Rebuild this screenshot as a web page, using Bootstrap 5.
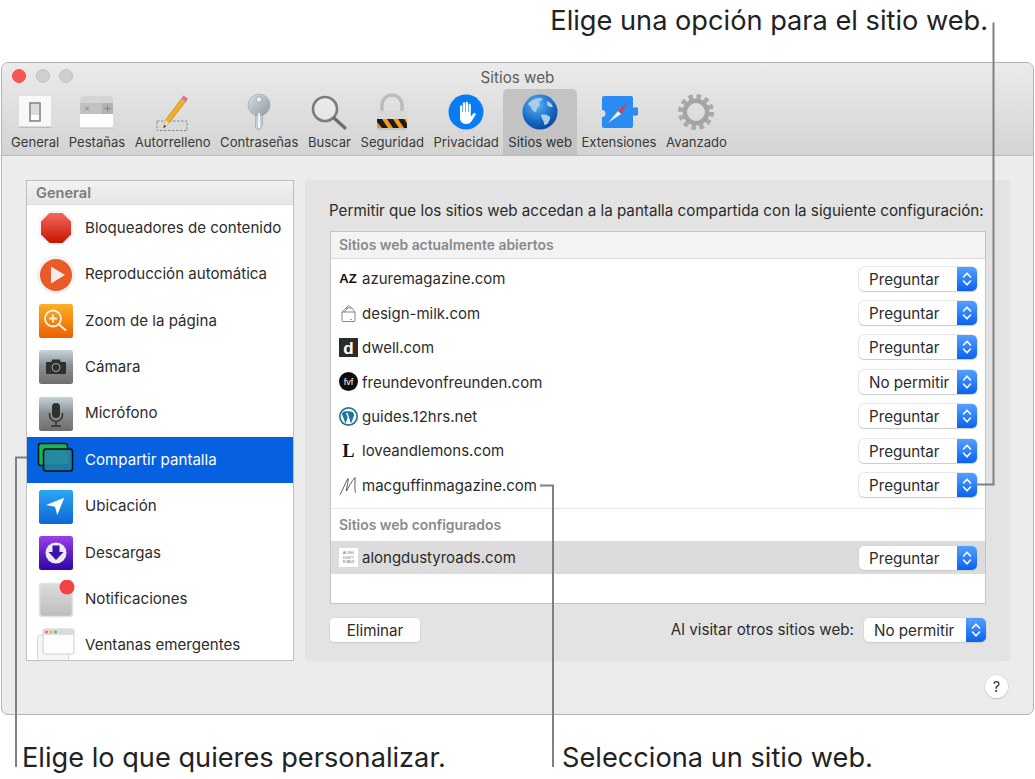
<!doctype html>
<html lang="es"><head><meta charset="utf-8"><title>Sitios web</title>
<link href="https://cdn.jsdelivr.net/npm/bootstrap@5.3.0/dist/css/bootstrap.min.css" rel="stylesheet">
<style>
html,body{background:#fff;margin:0;height:779px;overflow:hidden}
body{position:relative;font-family:Inter,"Liberation Sans",sans-serif;color:#2c2c2c;font-size:15.1px;width:1035px}
.top-note{height:62px;padding:5px 47px 0 0;text-align:right;font-size:27.2px;line-height:32px;color:#222}
.prefs-win{margin-left:1px;width:1033px;height:653px;border:1px solid #b4b4b4;border-radius:7px;background:#ececec;overflow:hidden}
.tool-head{height:93px;background:linear-gradient(#ebebeb,#d3d3d3);border-bottom:1px solid #bcbcbc;position:relative}
.lights{position:absolute;left:10px;top:6px;gap:9.6px}
.dot-l{width:14px;height:14px;border-radius:50%;background:#cfcfcf;border:1px solid #c2c2c2}
.dot-r{background:#fc5650;border-color:#f0504a}
.win-title{text-align:center;font-size:15.200px;line-height:18px;padding-top:6px;color:#5c5c5c;height:26px}
.tool-row{padding-left:4.250px;height:66px}
.tool-i{padding:4px 4.750px 0;text-align:center;font-size:13.100px;color:#3a3a3a;height:66px;white-space:nowrap}
.tool-i svg{display:block;margin:0 auto 2px;width:38px;height:38px}
.tool-on{background:#c3c3c3;border-radius:5px 5px 0 0;padding-left:5px;padding-right:5px;margin:0 -.25px;color:#303030}
.main-area{padding:24px 24px 0 24px;gap:11px;height:505px}
.side-box{width:268px;height:481px;border:1px solid #bfbfbf;background:#fff;overflow:hidden;flex:none}
.side-head{height:24px;line-height:25px;padding-left:9px;background:linear-gradient(#f2f2f2,#e6e6e6);border-bottom:1px solid #dedede;color:#7c7c7c;font-weight:600;font-size:14.600px}
.side-row{height:46.400px;border:0;border-radius:0!important;padding:0 0 0 10px;color:#2c2c2c;font-size:15.100px;background:transparent;gap:10px;white-space:nowrap}
.side-row svg{width:38px;height:38px;flex:none}
.side-row.side-on{background:#0561e0;color:#fff}
.pane-box{width:705px;height:481px;background:#e3e3e3;border-radius:4px;padding:20px 24px 0 24px;flex:none}
.pane-txt{font-size:15.200px;line-height:22px;height:31px;white-space:nowrap;color:#2c2c2c}
.site-box{width:656px;height:373px;margin-left:1px;border:1px solid #c4c4c4;background:#fff}
.sec-head{height:27px;line-height:27px;padding-left:8px;background:#f3f3f3;border-bottom:1px solid #dcdcdc;color:#8a8a8a;font-weight:600;font-size:13.900px}
.site-row{height:34.400px;padding:0 8px 0 8px;font-size:15px;gap:4px}
.site-row svg.fav{width:19px;height:19px;flex:none}
.site-name{flex:1 1 auto;padding-top:2px}
.site-list{padding-top:2.500px}
.sec-two{height:33px;line-height:33px;padding-left:8px;border-top:1px solid #e4e4e4;color:#8a8a8a;font-weight:600;font-size:13.900px;margin-top:6px}
.site-sel{background:#dcdcdc;height:33px}
.pop-b{height:24px;width:118px;border-radius:5px;background:#fff;box-shadow:0 0 0 .5px #d0d0d0,0 1px 1px #c8c8c8;overflow:hidden;font-size:15.200px;color:#2c2c2c}
.pop-t{padding-left:10px;line-height:25px;white-space:nowrap}
.pop-a{width:20px;height:24px;background:linear-gradient(#54a0ff,#0a62f0);display:flex;align-items:center;justify-content:center}
.pop-a svg{width:10px;height:16px}
.foot-row{height:58px;padding:14px 0 0 1px}
.plain-b{width:90px;height:24px;padding:0;background:#fff;border:0;border-radius:4px;box-shadow:0 0 0 .5px #d0d0d0,0 1px 1px #c8c8c8;font-size:15.200px;color:#2c2c2c;line-height:23px}
.foot-lab{font-size:15.200px;gap:10px;line-height:24px}
.pop-w{width:122px}
.help-row{padding:14px 25px 0 0}
.help-b{width:23px;height:23px;padding:0;border-radius:50%;border:0;background:#fff;box-shadow:0 0 0 .5px #ccc,0 1px 1px #bdbdbd;font-size:14.500px;line-height:22px;color:#333}
.low-notes{position:absolute;left:0;top:741px;width:1035px;height:34px;font-size:27.200px;line-height:34px;color:#222}
.low-a{margin-left:22px;width:540px}
.lead-lines{position:absolute;left:0;top:0;pointer-events:none}
.svg-defs{position:absolute}
</style></head><body>
<svg width="0" height="0" class="svg-defs"><defs>
<symbol id="updn" viewBox="0 0 10 16"><path d="M1.500 6 5 2.200 8.500 6M1.500 10 5 13.800 8.500 10" fill="none" stroke="#fff" stroke-width="1.600" stroke-linecap="round" stroke-linejoin="round"/></symbol>
<linearGradient id="gBlue" x1="0" y1="0" x2="0" y2="1"><stop offset="0" stop-color="#2ba6f5"/><stop offset="1" stop-color="#0f66d6"/></linearGradient>
<linearGradient id="gOr" x1="0" y1="0" x2="0" y2="1"><stop offset="0" stop-color="#fdb025"/><stop offset="1" stop-color="#ec5e00"/></linearGradient>
<linearGradient id="gRed" x1="0" y1="0" x2="0" y2="1"><stop offset="0" stop-color="#f2695c"/><stop offset="1" stop-color="#c81400"/></linearGradient>
<linearGradient id="gPur" x1="0" y1="0" x2="0" y2="1"><stop offset="0" stop-color="#9a3fe8"/><stop offset="1" stop-color="#2f04a6"/></linearGradient>
<linearGradient id="gCam" x1="0" y1="0" x2="0" y2="1"><stop offset="0" stop-color="#c6d4dc"/><stop offset=".45" stop-color="#8b9297"/><stop offset="1" stop-color="#6e6e6e"/></linearGradient>
<linearGradient id="gSil" x1="0" y1="0" x2="1" y2="1"><stop offset="0" stop-color="#d8dfe3"/><stop offset="1" stop-color="#8f999f"/></linearGradient>
<linearGradient id="gNot" x1="0" y1="0" x2="0" y2="1"><stop offset="0" stop-color="#dcdcdc"/><stop offset="1" stop-color="#bdbdbd"/></linearGradient>
<radialGradient id="gGlobe" cx=".4" cy=".3" r=".8"><stop offset="0" stop-color="#5db4f5"/><stop offset=".6" stop-color="#1569c7"/><stop offset="1" stop-color="#0a3f8c"/></radialGradient>
</defs></svg>

<div class="top-note">Elige una opción para el sitio web.</div>

<div class="prefs-win">
 <div class="tool-head">
  <div class="lights d-flex"><span class="dot-l dot-r"></span><span class="dot-l"></span><span class="dot-l"></span></div>
  <div class="win-title">Sitios web</div>
  <div class="tool-row d-flex">
   <div class="tool-i"><svg viewBox="0 0 38 38"><rect x="3" y="3" width="32" height="32" fill="#f8f8f8"/><rect x="3" y="33.500" width="32" height="1.500" fill="#bdbdbd"/><rect x="14" y="10" width="10" height="18" fill="#fff" stroke="#7d7d7d" stroke-width="1.500"/><rect x="15" y="11" width="8" height="11" fill="#dcdcdc"/></svg>General</div>
   <div class="tool-i"><svg viewBox="0 0 38 38"><rect x="2" y="3" width="33" height="33" rx="3" fill="#fff"/><path d="M2 14V6a3 3 0 0 1 3-3h27a3 3 0 0 1 3 3v8z" fill="#d4d4d4"/><rect x="2" y="10" width="33" height="11" fill="#c2c2c2"/><rect x="24" y="10" width="11" height="11" fill="#b2b2b2"/><path d="M7 13.500l4 4m0-4l-4 4M29.500 12.500v6m-3-3h6" stroke="#808080" stroke-width=".9" fill="none"/><rect x="2" y="34.500" width="33" height="1.200" fill="#bbb"/></svg>Pestañas</div>
   <div class="tool-i"><svg viewBox="0 0 38 38"><rect x="3" y="28" width="30" height="9.500" fill="none" stroke="#8a8a8a" stroke-dasharray="2.500 1.500"/><path d="M9.500 35l2-8L28 5l4 3L15 30z" fill="#f2b026" stroke="#b77a10" stroke-width=".6"/><path d="M9.500 35l2-8 3.500 3z" fill="#f1dcb6"/><path d="M9.500 35l.8-3 1.700 1.300z" fill="#222"/><path d="M27.500 5.500l2-3 4.500 3.200-2 3z" fill="#d96f9f"/></svg>Autorrelleno</div>
   <div class="tool-i"><svg viewBox="0 0 38 38"><path d="M15.500 19h7v13l-1.500 2v1l-2 2-3.500-2z" fill="#c6ced3" stroke="#959ea3" stroke-width=".6"/><circle cx="19" cy="12" r="11" fill="url(#gSil)" stroke="#a1abb1" stroke-width=".6"/><circle cx="19" cy="6.500" r="2.800" fill="#eee" stroke="#8a9399" stroke-width=".6"/><rect x="18.300" y="20" width="1.600" height="15" fill="#fff"/></svg>Contraseñas</div>
   <div class="tool-i"><svg viewBox="0 0 38 38"><circle cx="15" cy="16" r="12" fill="#f4f4f4" fill-opacity=".45" stroke="#7d7d7d" stroke-width="2.600"/><path d="M24 25l11 10" stroke="#6d6d6d" stroke-width="3.200" stroke-linecap="round"/></svg>Buscar</div>
   <div class="tool-i"><svg viewBox="0 0 38 38"><path d="M9 19v-7a10 10 0 0 1 20 0v7" fill="none" stroke="#b9bdc0" stroke-width="3.500"/><rect x="4" y="18" width="30" height="19" rx="1.500" fill="#c8c8c8"/><rect x="4" y="18" width="30" height="8" fill="#d8d8d8"/><rect x="4" y="26" width="30" height="9" fill="#f39a1e"/><path d="M4 26h5l6 9H9l-5-6zM14 26h6l6 9h-6zM25 26h6l3 4.500V35h-3z" fill="#1c1c1c"/></svg>Seguridad</div>
   <div class="tool-i"><svg viewBox="0 0 38 38"><circle cx="19" cy="19" r="17.500" fill="#0a7cf2"/><path d="M13 13.500c0-1.700 2.200-1.700 2.200 0V19h.6V10.500c0-1.700 2.300-1.700 2.300 0V19h.6V10c0-1.700 2.300-1.700 2.300 0v9h.6v-7c0-1.700 2.200-1.700 2.200 0v11.500l2.600-3c1.300-1.300 3.100 0 2.100 1.500l-3.800 6c-1.200 1.900-3 3-5.500 3-3.900 0-6.200-2.400-6.200-6.500z" fill="#fff"/></svg>Privacidad</div>
   <div class="tool-i tool-on"><svg viewBox="0 0 38 38"><circle cx="19" cy="19" r="17.500" fill="url(#gGlobe)"/><path d="M7 11c3-4 8-6 12-6 2 0 3 1 2 2l-3 2 1 3-3 3-1 4-3-1-2-4zM20 22c3-1 6 0 8 1 2 1 1 4-1 7-2 2-4 3-4 0 0-2-3-5-3-8zM26 8c3 1 5 3 6 6l-3 0-3-2z" fill="#a9cfe8"/></svg>Sitios web</div>
   <div class="tool-i"><svg viewBox="0 0 38 38"><path d="M2 5a2 2 0 0 1 2-2h27a2 2 0 0 1 2 2v10a4.200 4.200 0 1 1 0 7v11a2 2 0 0 1-2 2H4a2 2 0 0 1-2-2V24a3.500 3.500 0 1 0 0-7z" fill="#2a8bf2"/><path d="M28 9L18 18l3 3z" fill="#ea3a3f"/><path d="M8 30l10-12 3 3z" fill="#f4f4f4"/></svg>Extensiones</div>
   <div class="tool-i"><svg viewBox="0 0 38 38"><circle cx="19" cy="19" r="15.500" fill="none" stroke="#a8aaac" stroke-width="5" stroke-dasharray="4.500 3.620"/><circle cx="19" cy="19" r="11" fill="none" stroke="#a2a4a6" stroke-width="5"/><circle cx="19" cy="19" r="8.500" fill="none" stroke="#d9d9d9" stroke-width="1"/></svg>Avanzado</div>
  </div>
 </div>

 <div class="main-area d-flex">
  <div class="side-box">
   <div class="side-head">General</div>
   <div class="list-group list-group-flush">
    <div class="list-group-item side-row d-flex align-items-center"><svg viewBox="0 0 38 38"><path d="M11.500 2h15L36 11.500v15L26.500 36h-15L2 26.500v-15z" fill="#f3f3f3"/><path d="M12.500 4h13L34 12.500v13L25.500 34h-13L4 25.500v-13z" fill="url(#gRed)"/></svg>Bloqueadores de contenido</div>
    <div class="list-group-item side-row d-flex align-items-center"><svg viewBox="0 0 38 38"><circle cx="19" cy="19" r="18.500" fill="#f3f3f3" stroke="#e2e2e2" stroke-width=".5"/><circle cx="19" cy="19" r="16" fill="#ea5a28"/><path d="M14 10.500 28 19l-14 8.500z" fill="#f7ece6"/></svg>Reproducción automática</div>
    <div class="list-group-item side-row d-flex align-items-center"><svg viewBox="0 0 38 38"><rect x="2" y="2" width="34" height="34" rx="2.500" fill="url(#gOr)"/><circle cx="16" cy="16.500" r="8" fill="none" stroke="#fff4e0" stroke-width="1.800"/><path d="M16 12.500v8m-4-4h8M22 22.500l7 6" stroke="#fff4e0" stroke-width="1.800" fill="none"/></svg>Zoom de la página</div>
    <div class="list-group-item side-row d-flex align-items-center"><svg viewBox="0 0 38 38"><rect x="2" y="2" width="34" height="34" rx="2.500" fill="url(#gCam)"/><path d="M10 14h4l1.500-2.500h7L24 14h4a1 1 0 0 1 1 1v10a1 1 0 0 1-1 1H10a1 1 0 0 1-1-1V15a1 1 0 0 1 1-1z" fill="#2f2f2f"/><circle cx="19" cy="19.500" r="4" fill="none" stroke="#a9a9a9" stroke-width="1"/></svg>Cámara</div>
    <div class="list-group-item side-row d-flex align-items-center"><svg viewBox="0 0 38 38"><rect x="2" y="2" width="34" height="34" rx="2.500" fill="url(#gCam)"/><rect x="15" y="8" width="8" height="15" rx="4" fill="#2f2f2f"/><path d="M12.500 18v2a6.500 6.500 0 0 0 13 0v-2M19 26.500v4m-5 .5h10" stroke="#2f2f2f" stroke-width="1.400" fill="none"/></svg>Micrófono</div>
    <div class="list-group-item side-row side-on d-flex align-items-center"><svg viewBox="0 0 38 38"><rect x="1.500" y="2.500" width="29" height="22" rx="2.500" fill="#1cb35a" stroke="#0b1a10" stroke-width="1.500"/><rect x="6.500" y="8" width="29" height="22" rx="2.500" fill="#1f7fa3" fill-opacity=".92" stroke="#0a0f16" stroke-width="1.500"/><rect x="8" y="10" width="24" height="13" fill="#2a8fa0" opacity=".6"/></svg>Compartir pantalla</div>
    <div class="list-group-item side-row d-flex align-items-center"><svg viewBox="0 0 38 38"><rect x="2" y="2" width="34" height="34" rx="2.500" fill="url(#gBlue)"/><path d="M9 17 27.300 9.700 20.300 27 18 18.700z" fill="#fff"/></svg>Ubicación</div>
    <div class="list-group-item side-row d-flex align-items-center"><svg viewBox="0 0 38 38"><rect x="2" y="2" width="34" height="34" rx="2.500" fill="url(#gPur)"/><circle cx="19" cy="19" r="10.500" fill="#ececec"/><path d="M15.500 11.500h7V18h4L19 26l-7.500-8h4z" fill="#3d12b0"/></svg>Descargas</div>
    <div class="list-group-item side-row d-flex align-items-center"><svg viewBox="0 0 38 38"><rect x="2.500" y="3.500" width="33" height="33" rx="3" fill="url(#gNot)"/><rect x="2.500" y="3.500" width="33" height="33" rx="3" fill="none" stroke="#e4e4e4" stroke-width="1.500"/><circle cx="30" cy="7" r="7.500" fill="#f24446"/></svg>Notificaciones</div>
    <div class="list-group-item side-row d-flex align-items-center"><svg viewBox="0 0 38 38"><rect x=".5" y="8" width="31" height="29" rx="2" fill="#f6f6f6" stroke="#dadada"/><rect x="6" y="2" width="31" height="25" rx="2" fill="#fdfdfd" stroke="#cfcfcf"/><path d="M6 8V4a2 2 0 0 1 2-2h27a2 2 0 0 1 2 2v4z" fill="#dcdcdc"/><circle cx="9.500" cy="5" r="1.500" fill="#ef6a60"/><circle cx="14" cy="5" r="1.500" fill="#f0b33f"/><circle cx="18.500" cy="5" r="1.500" fill="#5ec24e"/></svg>Ventanas emergentes</div>
   </div>
  </div>

  <div class="pane-box">
   <div class="pane-txt">Permitir que los sitios web accedan a la pantalla compartida con la siguiente configuración:</div>
   <div class="site-box">
    <div class="sec-head">Sitios web actualmente abiertos</div>
    <div class="site-list">
     <div class="site-row d-flex align-items-center"><svg class="fav" viewBox="0 0 19 19"><text x="9" y="14" text-anchor="middle" font-family="Liberation Sans" font-weight="700" font-size="13" fill="#111">AZ</text></svg><span class="site-name">azuremagazine.com</span><div class="pop-b d-flex justify-content-between"><span class="pop-t">Preguntar</span><span class="pop-a"><svg><use href="#updn"/></svg></span></div></div>
     <div class="site-row d-flex align-items-center"><svg class="fav" viewBox="0 0 19 19"><path d="M3 8h13v8.500a1 1 0 0 1-1 1H4a1 1 0 0 1-1-1zM3 8l4-4h6l3 4M7 4l3-2.500L12.500 4M5.500 8l3-4" fill="none" stroke="#6b6b6b" stroke-width=".8"/><path d="M11 15.500h2" stroke="#777" stroke-width=".7"/></svg><span class="site-name">design-milk.com</span><div class="pop-b d-flex justify-content-between"><span class="pop-t">Preguntar</span><span class="pop-a"><svg><use href="#updn"/></svg></span></div></div>
     <div class="site-row d-flex align-items-center"><svg class="fav" viewBox="0 0 19 19"><rect width="19" height="19" fill="#2b2b2b"/><text x="9.500" y="16" text-anchor="middle" font-family="Liberation Sans" font-weight="700" font-size="17" fill="#fff">d</text></svg><span class="site-name">dwell.com</span><div class="pop-b d-flex justify-content-between"><span class="pop-t">Preguntar</span><span class="pop-a"><svg><use href="#updn"/></svg></span></div></div>
     <div class="site-row d-flex align-items-center"><svg class="fav" viewBox="0 0 19 19"><circle cx="9.500" cy="9.500" r="9.500" fill="#0c0c0c"/><text x="9.500" y="12.700" text-anchor="middle" font-family="Liberation Sans" font-size="9" fill="#fff">fvf</text></svg><span class="site-name">freundevonfreunden.com</span><div class="pop-b d-flex justify-content-between"><span class="pop-t">No permitir</span><span class="pop-a"><svg><use href="#updn"/></svg></span></div></div>
     <div class="site-row d-flex align-items-center"><svg class="fav" viewBox="0 0 19 19"><circle cx="9.500" cy="9.500" r="9.500" fill="#21759b"/><circle cx="9.500" cy="9.500" r="7.800" fill="#fff"/><path d="M2.800 6.500 6.500 16.800 8.700 10.600 7 6h1.600L12 16.600 15 9c.6-1.600-.5-3-1.600-4.200L9 4.200 5 4.500z" fill="#21759b"/></svg><span class="site-name">guides.12hrs.net</span><div class="pop-b d-flex justify-content-between"><span class="pop-t">Preguntar</span><span class="pop-a"><svg><use href="#updn"/></svg></span></div></div>
     <div class="site-row d-flex align-items-center"><svg class="fav" viewBox="0 0 19 19"><text x="9.500" y="16" text-anchor="middle" font-family="Liberation Serif" font-weight="700" font-size="18" fill="#111">L</text></svg><span class="site-name">loveandlemons.com</span><div class="pop-b d-flex justify-content-between"><span class="pop-t">Preguntar</span><span class="pop-a"><svg><use href="#updn"/></svg></span></div></div>
     <div class="site-row d-flex align-items-center"><svg class="fav" viewBox="0 0 19 19"><path d="M1 18.500C3.500 15 6.500 6 9 2.500c.7 3.500-2 10.500-1.500 12.500C9 12 13 4.500 16 1.500c.6 3.500-1 11.500.5 15" fill="none" stroke="#333" stroke-width=".8"/></svg><span class="site-name">macguffinmagazine.com</span><div class="pop-b d-flex justify-content-between"><span class="pop-t">Preguntar</span><span class="pop-a"><svg><use href="#updn"/></svg></span></div></div>
    </div>
    <div class="sec-two">Sitios web configurados</div>
    <div class="site-row site-sel d-flex align-items-center"><svg class="fav" viewBox="0 0 19 19"><rect width="19" height="19" fill="#fff"/><text x="9.500" y="6" text-anchor="middle" font-family="Liberation Sans" font-size="3.200" fill="#666">ALONG</text><text x="9.500" y="10.500" text-anchor="middle" font-family="Liberation Sans" font-size="3.200" fill="#666">DUSTY</text><text x="9.500" y="15" text-anchor="middle" font-family="Liberation Sans" font-size="3.200" fill="#666">ROADS</text></svg><span class="site-name">alongdustyroads.com</span><div class="pop-b d-flex justify-content-between"><span class="pop-t">Preguntar</span><span class="pop-a"><svg><use href="#updn"/></svg></span></div></div>
   </div>
   <div class="foot-row d-flex justify-content-between">
    <button type="button" class="btn plain-b">Eliminar</button>
    <div class="foot-lab d-flex align-items-start"><span>Al visitar otros sitios web:</span><div class="pop-b pop-w d-flex justify-content-between"><span class="pop-t">No permitir</span><span class="pop-a"><svg><use href="#updn"/></svg></span></div></div>
   </div>
  </div>
 </div>
 <div class="help-row d-flex justify-content-end"><button type="button" class="btn help-b">?</button></div>
</div>

<div class="low-notes d-flex"><span class="low-a">Elige lo que quieres personalizar.</span><span>Selecciona un sitio web.</span></div>

<svg class="lead-lines" width="1035" height="779" viewBox="0 0 1035 779"><path d="M993.500 22.500V484.500H977M540 485.500H553V767M27 457.500H16V767" fill="none" stroke="#808080" stroke-width="2"/></svg>
</body></html>
